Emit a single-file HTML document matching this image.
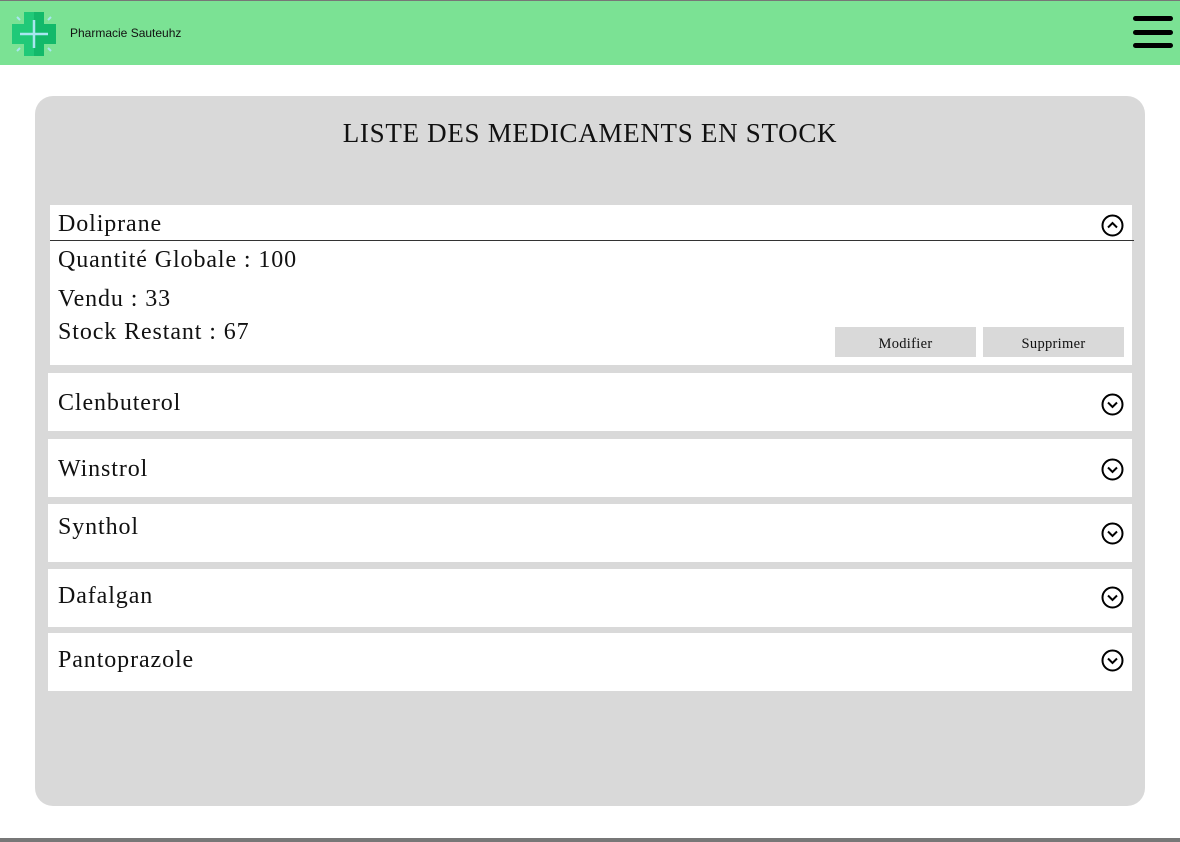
<!DOCTYPE html>
<html><head><style>
*{margin:0;padding:0;box-sizing:border-box}
body{width:1180px;height:842px;background:#fff;position:relative;overflow:hidden;font-family:"Liberation Serif",serif;color:#111}
.hdr{position:absolute;left:0;top:0;width:1180px;height:65px;background:#7be294;border-top:1px solid #777}
.brand{position:absolute;left:70px;top:25px;font:12px "Liberation Sans",sans-serif;color:#111}
.menu{position:absolute;left:1133px;width:40px;height:5px;background:#000;border-radius:3px}
.panel{position:absolute;left:35px;top:96px;width:1110px;height:710px;background:#d9d9d9;border-radius:18px}
h1{position:absolute;left:35px;width:1110px;top:118px;text-align:center;font-weight:normal;font-size:27px;letter-spacing:0.7px}
.item{position:absolute;left:48px;width:1084px;background:#fff;font-size:24px;letter-spacing:0.9px}
.item .t{position:absolute;left:10px}
.item svg{position:absolute;left:1053px}
.btn{position:absolute;top:327px;height:30px;width:141px;background:#d9d9d9;font-size:14.5px;text-align:center;line-height:34px;letter-spacing:0.3px}
.bot{position:absolute;left:0;top:838px;width:1180px;height:4px;background:#777}
</style></head><body>
<div class="hdr">
<svg style="position:absolute;left:12px;top:11px" width="44" height="44" viewBox="0 0 44 44">
<path d="M12 0h20v12h12v20h-12v12h-20v-12h-12v-20h12z" fill="#20c978"/>
<path d="M22 0h10v12h12v20h-12v12h-10z" fill="#13b96a"/>
<path d="M22 8v28M8 22h28" stroke="#a8e6f0" stroke-width="2.5"/>
<g stroke="#a8e6f0" stroke-width="2"><path d="M5 5l3 3M39 5l-3 3M5 39l3-3M39 39l-3-3"/></g>
</svg>
<div class="brand">Pharmacie Sauteuhz</div>
<div class="menu" style="top:15px"></div><div class="menu" style="top:29px"></div><div class="menu" style="top:42px"></div>
</div>
<div class="panel"></div>
<h1>LISTE DES MEDICAMENTS EN STOCK</h1>
<div class="item" style="top:205px;height:160px;border-left:2px solid #d9d9d9">
<div class="t" style="top:6px;left:8px">Doliprane</div>
<div style="position:absolute;left:0;top:35px;width:1084px;height:1px;background:#333"></div>
<svg style="top:9px;left:1051px" width="23" height="23" viewBox="0 0 23 23"><circle cx="11.5" cy="11.5" r="10" fill="none" stroke="#000" stroke-width="2"/><path d="M7 13.5l4.5-4.5 4.5 4.5" fill="none" stroke="#000" stroke-width="2"/></svg>
<div class="t" style="top:42px;left:8px">Quantité Globale : 100</div>
<div class="t" style="top:81px;left:8px">Vendu : 33</div>
<div class="t" style="top:114px;left:8px">Stock Restant : 67</div>
</div>
<div class="btn" style="left:835px">Modifier</div>
<div class="btn" style="left:983px">Supprimer</div>
<div class="item" style="top:373px;height:58px"><div class="t" style="top:17px">Clenbuterol</div><svg style="top:20px" width="23" height="23" viewBox="0 0 23 23"><circle cx="11.5" cy="11.5" r="10" fill="none" stroke="#000" stroke-width="2"/><path d="M7 9.5l4.5 4.5 4.5-4.5" fill="none" stroke="#000" stroke-width="2"/></svg></div>
<div class="item" style="top:439px;height:58px"><div class="t" style="top:17px">Winstrol</div><svg style="top:19px" width="23" height="23" viewBox="0 0 23 23"><circle cx="11.5" cy="11.5" r="10" fill="none" stroke="#000" stroke-width="2"/><path d="M7 9.5l4.5 4.5 4.5-4.5" fill="none" stroke="#000" stroke-width="2"/></svg></div>
<div class="item" style="top:504px;height:58px"><div class="t" style="top:10px">Synthol</div><svg style="top:18px" width="23" height="23" viewBox="0 0 23 23"><circle cx="11.5" cy="11.5" r="10" fill="none" stroke="#000" stroke-width="2"/><path d="M7 9.5l4.5 4.5 4.5-4.5" fill="none" stroke="#000" stroke-width="2"/></svg></div>
<div class="item" style="top:569px;height:58px"><div class="t" style="top:14px">Dafalgan</div><svg style="top:17px" width="23" height="23" viewBox="0 0 23 23"><circle cx="11.5" cy="11.5" r="10" fill="none" stroke="#000" stroke-width="2"/><path d="M7 9.5l4.5 4.5 4.5-4.5" fill="none" stroke="#000" stroke-width="2"/></svg></div>
<div class="item" style="top:633px;height:58px"><div class="t" style="top:14px">Pantoprazole</div><svg style="top:16px" width="23" height="23" viewBox="0 0 23 23"><circle cx="11.5" cy="11.5" r="10" fill="none" stroke="#000" stroke-width="2"/><path d="M7 9.5l4.5 4.5 4.5-4.5" fill="none" stroke="#000" stroke-width="2"/></svg></div>
<div class="bot"></div>
</body></html>
